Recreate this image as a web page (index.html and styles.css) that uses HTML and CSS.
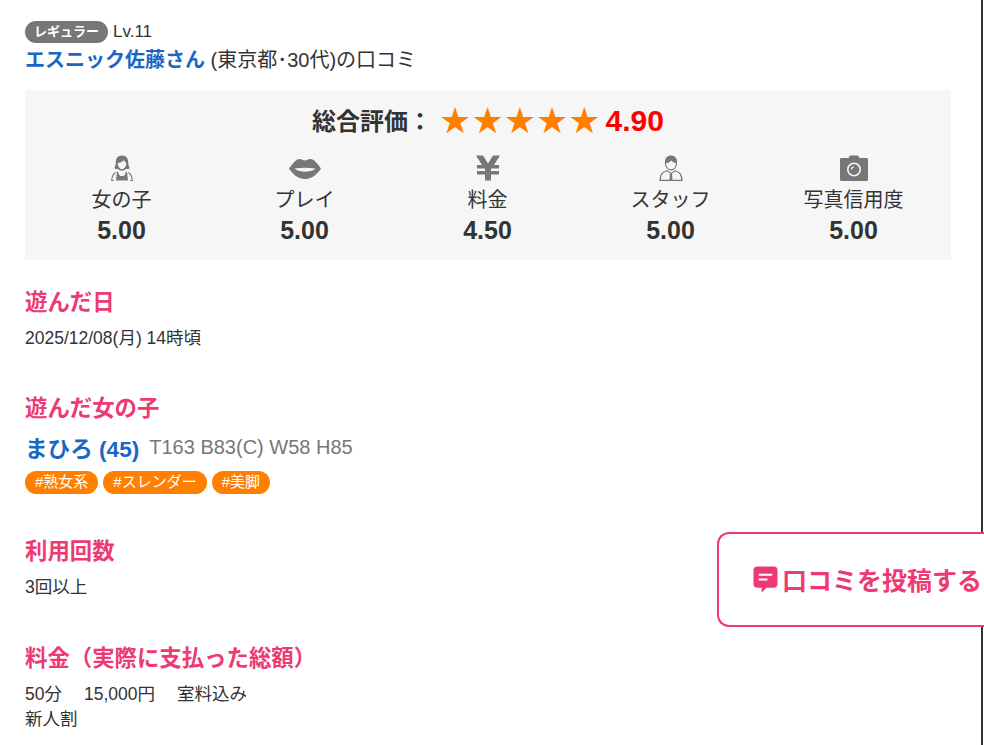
FILE: index.html
```html
<!DOCTYPE html>
<html lang="ja">
<head>
    <meta charset="UTF-8">
    <meta name="viewport" content="width=device-width, initial-scale=1.0">
    <title>口コミ</title>
    <link rel="stylesheet" href="styles.css">
</head>
<body>
    <div class="page">
        <div class="reviewer">
            <div class="reviewer-rank">
                <span class="rank-badge">レギュラー</span>
                <span class="rank-level">Lv.11</span>
            </div>
            <div class="reviewer-name">
                <a class="name-link">エスニック佐藤さん</a> (東京都･30代)の口コミ
            </div>
        </div>

        <div class="rating-box">
            <div class="rating-total">
                <span class="rating-label">総合評価：</span>
                <span class="stars">★★★★★</span>
                <span class="rating-score">4.90</span>
            </div>
            <div class="rating-items">
                <div class="rating-item">
                    <svg class="rating-icon" viewBox="0 0 24 26">
                        <path fill="#777" d="M12 0.500c-4 0-6.200 2.800-6.200 6.500 0 2.600-0.600 4.500-1.600 6.200 1.200 0.800 2.600 1 3.800 0.900 1 1 2.500 1.700 4 1.700s3-0.700 4-1.700c1.200 0.100 2.600-0.100 3.800-0.900-1-1.700-1.600-3.600-1.600-6.200 0-3.700-2.200-6.500-6.200-6.500z"/>
                        <path fill="#f6f6f6" d="M7.800 8c2.500-0.300 4.800-1.200 6-3 0.700 1.400 1.500 2.400 2.500 3 0 3.200-1.800 6.200-4.300 6.200s-4.200-3-4.200-6.200z"/>
                        <path fill="#777" d="M7 16.500l1.200 0.400c0.500 3 1.600 4.100 3.800 4.100s3.300-1.100 3.800-4.100l1.200-0.400 1 9h-12z"/>
                        <path fill="none" stroke="#777" stroke-width="1.200" d="M5.800 17.500c-2.300 0.800-3.600 2.100-4.100 8h2.300M18.200 17.500c2.300 0.800 3.600 2.100 4.100 8h-2.300"/>
                    </svg>
                    <div class="item-name">女の子</div>
                    <div class="item-score">5.00</div>
                </div>
                <div class="rating-item">
                    <svg class="rating-icon" viewBox="0 -3 32 26">
                        <path fill="#777" fill-rule="evenodd" d="M0 10.500c3.500-4.500 7-9.500 10.500-9.500 2.200 0 4 1.500 5.500 1.500s3.300-1.500 5.500-1.500c3.500 0 7 5 10.500 9.500-3.500 5-8.500 10.500-16 10.500s-12.500-5.500-16-10.500zM5.500 10.500c3 2.700 7 3.200 10.500 3.200s7.500-0.500 10.500-3.200c-3.500-0.600-7-0.700-10.500-0.700s-7 0.100-10.500 0.700z"/>
                    </svg>
                    <div class="item-name">プレイ</div>
                    <div class="item-score">5.00</div>
                </div>
                <div class="rating-item">
                    <svg class="rating-icon" viewBox="0 0 24 26">
                        <path fill="#777" d="M0 0.500h7l5 8 5-8h7l-6 9.500h5v3.500h-8v2.500h8v3.500h-8v6h-6v-6h-8v-3.500h8v-2.500h-8v-3.500h5z"/>
                    </svg>
                    <div class="item-name">料金</div>
                    <div class="item-score">4.50</div>
                </div>
                <div class="rating-item">
                    <svg class="rating-icon" viewBox="0 0 24 26">
                        <path fill="#777" d="M12 0.500c-3.600 0-6 2.500-6 6 0 0.600 0.100 1.200 0.200 1.700 2.800-0.200 4.800-1 6.300-2.700 1 1.600 2.800 2.500 5.300 2.700 0.100-0.500 0.200-1.100 0.200-1.700 0-3.500-2.400-6-6-6z"/>
                        <path fill="none" stroke="#777" stroke-width="1.200" d="M6.300 8c0.500 3.700 2.800 6.800 5.700 6.800s5.200-3.100 5.700-6.800M8 15.800c-4 1.200-6.500 2.300-7 9.600h22c-0.500-7.300-3-8.400-7-9.600l-4 2.600z"/>
                        <path fill="#777" d="M11 18.500h2l0.500 7h-3z"/>
                    </svg>
                    <div class="item-name">スタッフ</div>
                    <div class="item-score">5.00</div>
                </div>
                <div class="rating-item">
                    <svg class="rating-icon" viewBox="0 0 28 26">
                        <path fill="#777" d="M8.500 3l1.500-2.500h8l1.500 2.500h7c0.900 0 1.500 0.600 1.500 1.500v20c0 0.900-0.600 1.500-1.500 1.500h-25c-0.900 0-1.500-0.600-1.500-1.500v-20c0-0.900 0.600-1.500 1.500-1.500z"/>
                        <circle cx="14" cy="14.500" r="6.200" fill="none" stroke="#f6f6f6" stroke-width="1.600"/>
                        <path fill="none" stroke="#f6f6f6" stroke-width="1.200" d="M11.500 14.500c0-1.500 1-2.500 2.500-2.500"/>
                    </svg>
                    <div class="item-name">写真信用度</div>
                    <div class="item-score">5.00</div>
                </div>
            </div>
        </div>

        <section class="block block-date">
            <h3 class="block-title">遊んだ日</h3>
            <p class="block-text">2025/12/08(月) 14時頃</p>
        </section>

        <section class="block block-girl">
            <h3 class="block-title">遊んだ女の子</h3>
            <div class="girl-line">
                <a class="girl-name">まひろ (45)</a>
                <span class="girl-size">T163 B83(C) W58 H85</span>
            </div>
            <div class="tags">
                <span class="tag">#熟女系</span>
                <span class="tag">#スレンダー</span>
                <span class="tag">#美脚</span>
            </div>
        </section>

        <section class="block block-count">
            <h3 class="block-title">利用回数</h3>
            <p class="block-text">3回以上</p>
        </section>

        <section class="block block-price">
            <h3 class="block-title">料金（実際に支払った総額）</h3>
            <div class="block-text price-row">
                <span>50分</span>
                <span>15,000円</span>
                <span>室料込み</span>
            </div>
            <p class="block-text">新人割</p>
        </section>
    </div>

    <a class="post-button">
        <svg class="post-icon" viewBox="0 0 26 28">
            <path fill="#ee3a74" d="M4 0.500h18c2 0 3.500 1.500 3.500 3.500v15c0 2-1.500 3.500-3.500 3.500h-8l-5 5v-5h-5c-2 0-3.500-1.500-3.500-3.500v-15c0-2 1.500-3.500 3.500-3.500z"/>
            <path fill="#fff" d="M6 8h14v2h-14zM6 13h9v2h-9z"/>
        </svg>
        <span class="post-label">口コミを投稿する</span>
    </a>
</body>
</html>
```

FILE: styles.css
```css
* {
    margin: 0;
    padding: 0;
    box-sizing: border-box;
}

html,
body {
    height: 745px;
    overflow: hidden;
}

body {
    font-family: "Liberation Sans", "Noto Sans CJK JP", sans-serif;
    background: #fff;
    color: #333;
    font-size: 16px;
    position: relative;
}

.page {
    width: 983px;
    height: 745px;
    padding: 21px 30px 0 25px;
    border-right: 2px solid #333;
    overflow: hidden;
}

.reviewer-rank {
    display: flex;
    align-items: center;
    gap: 5px;
    height: 22px;
}

.rank-badge {
    background: #777;
    color: #fff;
    font-size: 13px;
    font-weight: 700;
    line-height: 22px;
    height: 22px;
    padding: 0 9px;
    border-radius: 11px;
}

.rank-level {
    font-size: 17px;
}

.reviewer-name {
    font-size: 20px;
    line-height: 26px;
    margin-top: 4px;
}

.name-link {
    color: #1a66c4;
    font-weight: 700;
}

.rating-box {
    width: 926px;
    height: 170px;
    margin-top: 17px;
    background: #f6f6f6;
    padding-top: 10px;
}

.rating-total {
    display: flex;
    justify-content: center;
    align-items: center;
    height: 42px;
}

.rating-label {
    font-size: 24px;
    font-weight: 700;
    margin-bottom: 3px;
}

.stars {
    font-size: 36px;
    line-height: 42px;
    color: #ff7f00;
    font-family: "DejaVu Sans", sans-serif;
    margin: 0 5px 0 7px;
}

.rating-score {
    font-size: 30px;
    font-weight: 700;
    color: #f00;
}

.rating-items {
    display: grid;
    grid-template-columns: repeat(5, 183px);
    margin-left: 5px;
}

.rating-item {
    text-align: center;
}

.rating-icon {
    display: block;
    height: 26px;
    margin: 13px auto 0;
}

.item-name {
    font-size: 20px;
    line-height: 30px;
    margin-top: 4px;
}

.item-score {
    font-size: 25px;
    font-weight: 700;
    line-height: 30px;
}

.block-title {
    color: #ee3a74;
    font-size: 22.4px;
    line-height: 30px;
    font-weight: 700;
}

.block-text {
    font-size: 17.5px;
    line-height: 25px;
}

.price-row {
    display: flex;
    gap: 22px;
}

.block-date {
    margin-top: 28px;
}

.block-date .block-text,
.block-count .block-text,
.block-price .block-title + .block-text {
    margin-top: 8px;
}

.block-girl {
    margin-top: 43px;
}

.girl-line {
    display: flex;
    align-items: center;
    gap: 10px;
    margin-top: 7px;
    height: 32px;
}

.girl-name {
    color: #1a66c4;
    font-size: 22.6px;
    font-weight: 700;
}

.girl-size {
    color: #777;
    font-size: 20px;
}

.tags {
    display: flex;
    gap: 5px;
    margin-top: 8px;
}

.tag {
    background: #ff7f00;
    color: #fff;
    font-size: 15px;
    line-height: 22px;
    height: 23px;
    padding: 0 10px;
    border-radius: 12px;
}

.block-count {
    margin-top: 43px;
}

.block-price {
    margin-top: 44px;
}

.post-button {
    position: absolute;
    left: 717px;
    top: 532px;
    width: 270px;
    height: 95px;
    display: flex;
    align-items: center;
    gap: 4px;
    padding-left: 34px;
    background: #fff;
    border: 2px solid #ee3a74;
    border-radius: 12px 0 0 12px;
    border-right: none;
    color: #ee3a74;
    font-size: 25px;
    font-weight: 700;
}

.post-label {
    margin-bottom: 2px;
}

.post-icon {
    width: 25px;
    height: 27px;
    flex-shrink: 0;
}
```
